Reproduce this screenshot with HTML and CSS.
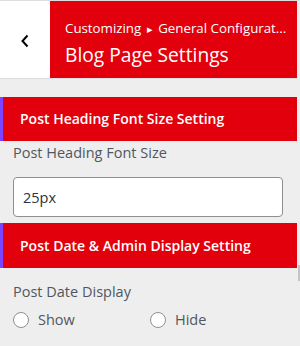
FILE: index.html
```html
<!DOCTYPE html>
<html lang="en">
<head>
    <meta charset="UTF-8">
    <title>Blog Page Settings</title>
    <link rel="stylesheet" href="styles.css">
</head>
<body>

<div class="frame">
    <div class="panel">
        <header class="section-title">
            <div class="back-button">
                <svg width="10" height="14" viewBox="0 0 10 14"><path d="M7.5 1.5 L2.5 7 L7.5 12.5" fill="none" stroke="#000" stroke-width="2"/></svg>
            </div>
            <div class="title-box">
                <div class="crumbs">Customizing <span class="arrow">&#9656;</span> General Configurat...</div>
                <h1>Blog Page Settings</h1>
            </div>
        </header>

        <div class="group-title">Post Heading Font Size Setting</div>
        <div class="control">
            <label class="control-label">Post Heading Font Size</label>
            <input class="text-input" type="text" value="25px">
        </div>

        <div class="group-title tall">Post Date &amp; Admin Display Setting</div>
        <div class="control lower">
            <label class="control-label">Post Date Display</label>
            <div class="radio-row">
                <label class="radio"><span class="circle"></span>Show</label>
                <label class="radio"><span class="circle"></span>Hide</label>
            </div>
        </div>
    </div>
    <div class="scrollbar">
        <div class="thumb"></div>
    </div>
</div>

</body>
</html>
```
FILE: styles.css
```css
body {
    margin: 0;
    padding: 0;
    background-color: #eeeeee;
    font-family: "Open Sans", "Noto Sans", sans-serif;
    color: #50575e;
    overflow: hidden;
}
.frame {
    display: flex;
    height: 346px;
    border-top: 1px solid #dddddd;
    box-sizing: border-box;
}
.panel {
    width: 297px;
}
.scrollbar {
    width: 3px;
    background-color: #eeeeee;
    padding-top: 264px;
}
.thumb {
    height: 16px;
    width: 2px;
    margin-left: 1px;
    background-color: #c4c4c4;
}
.section-title {
    display: flex;
    height: 77px;
    border-bottom: 1px solid #dddddd;
}
.back-button {
    width: 50px;
    background-color: #ffffff;
    display: flex;
    align-items: center;
    justify-content: center;
    padding-top: 3px;
    box-sizing: border-box;
}
.title-box {
    flex: 1;
    background-color: #e2000c;
    color: #ffffff;
    padding: 17px 0 0 15px;
    overflow: hidden;
}
.crumbs {
    font-size: 13.3px;
    line-height: 20px;
    white-space: nowrap;
}
.crumbs .arrow {
    font-size: 11px;
    margin: 0 2px;
}
.title-box h1 {
    margin: 3px 0 0 0;
    font-size: 19.2px;
    font-weight: 400;
    line-height: 26px;
    white-space: nowrap;
}
.group-title {
    margin-top: 18px;
    height: 44px;
    line-height: 44px;
    background-color: #e2000c;
    border-left: 3px solid #7b45ff;
    color: #ffffff;
    font-size: 14px;
    font-weight: 600;
    padding-left: 17px;
}
.group-title.tall {
    margin-top: 0;
    height: 45px;
    line-height: 45px;
}
.control {
    padding: 2px 14px 6px 13px;
}
.control.lower {
    padding-top: 14px;
}
.control-label {
    display: block;
    font-size: 14.5px;
    line-height: 20px;
}
.text-input {
    display: block;
    width: 100%;
    height: 40px;
    margin-top: 14px;
    box-sizing: border-box;
    border: 1px solid #8c8f94;
    border-radius: 4px;
    background-color: #ffffff;
    padding: 0 9px;
    font-family: "Open Sans", "Noto Sans", sans-serif;
    font-size: 14.5px;
    color: #2c3338;
}
.radio-row {
    display: flex;
    margin-top: 8px;
}
.radio {
    display: flex;
    align-items: center;
    width: 137px;
    flex-shrink: 0;
    font-size: 14.5px;
    line-height: 20px;
}
.circle {
    flex-shrink: 0;
    width: 16px;
    height: 16px;
    box-sizing: border-box;
    border: 1px solid #8c8f94;
    border-radius: 50%;
    background-color: #ffffff;
    margin-right: 9px;
}
```
